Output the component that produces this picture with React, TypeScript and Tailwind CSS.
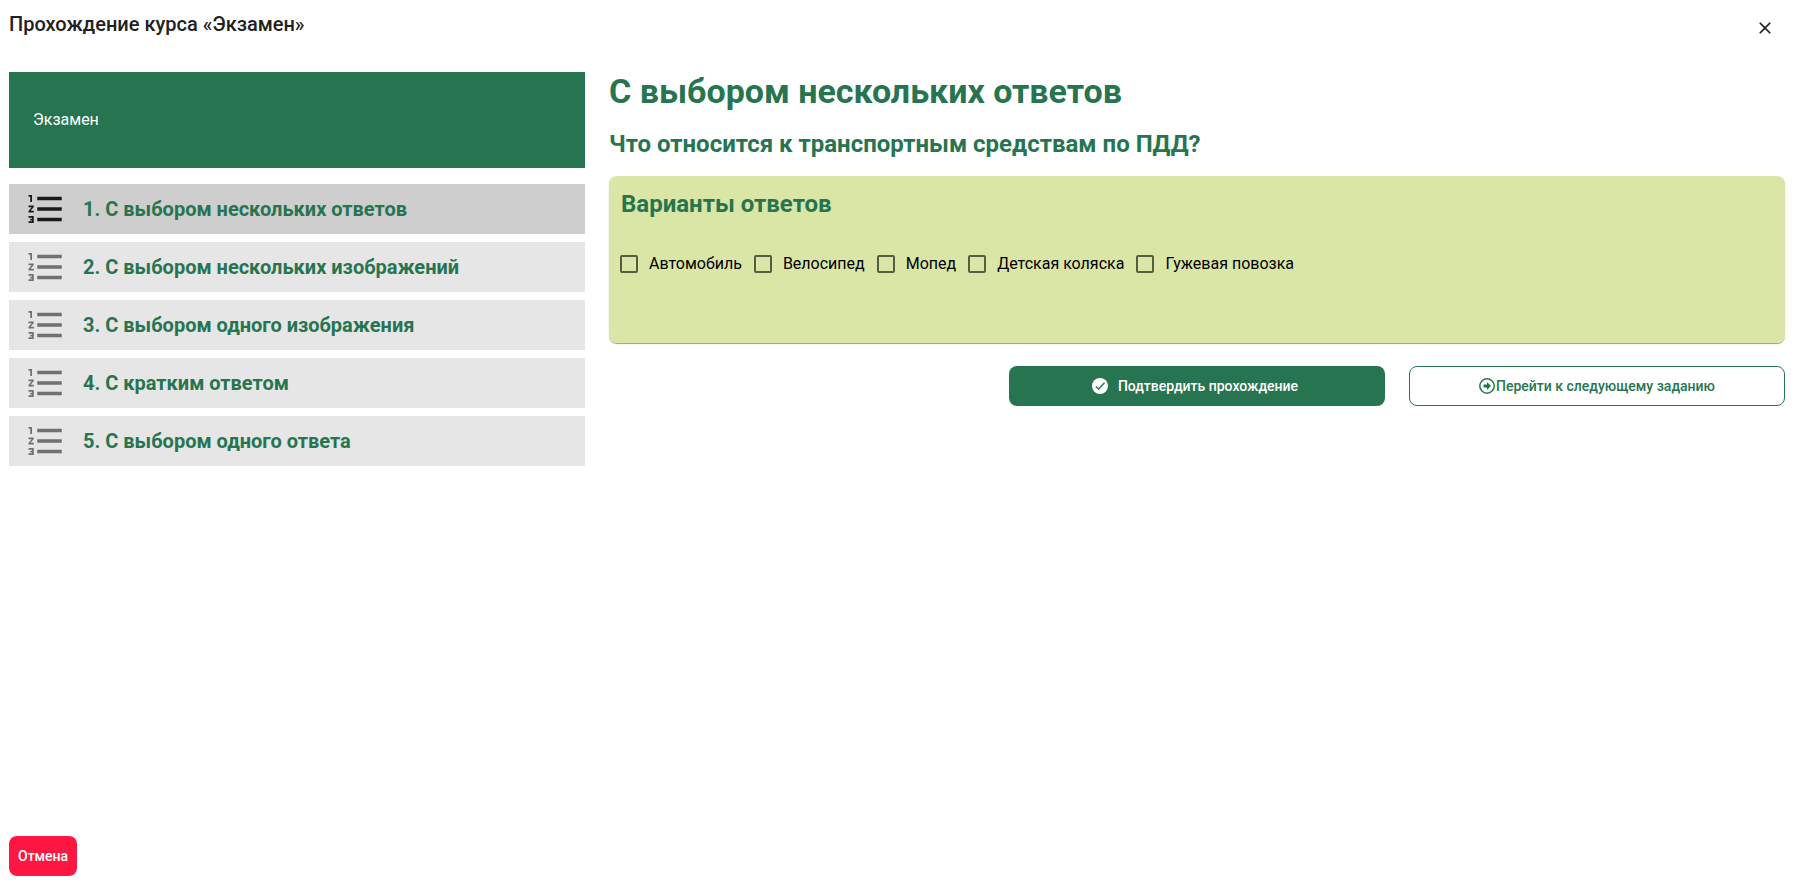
import { useState } from "react";
import { MdClose, MdFormatListNumbered } from "react-icons/md";

const tasks = [
  "С выбором нескольких ответов",
  "С выбором нескольких изображений",
  "С выбором одного изображения",
  "С кратким ответом",
  "С выбором одного ответа",
];

const answers = ["Автомобиль", "Велосипед", "Мопед", "Детская коляска", "Гужевая повозка"];

function CheckIcon() {
  return (
    <svg viewBox="0 0 16 16" className="size-4 shrink-0" fill="none" aria-hidden="true">
      <circle cx="8" cy="8" r="8" fill="#ffffff" />
      <path d="M3.8 8.4 6.6 11.1 12.5 4.8" stroke="#277550" strokeWidth="1.4" />
    </svg>
  );
}

function NextIcon() {
  return (
    <svg viewBox="0 0 16 16" className="size-4 shrink-0" fill="none" aria-hidden="true">
      <circle cx="8" cy="8" r="7.2" stroke="currentColor" strokeWidth="1.5" />
      <path d="M4.5 6.4H8V4L12 8 8 12V9.6H4.5Z" fill="currentColor" />
    </svg>
  );
}

function TaskList({ active, onSelect }: { active: number; onSelect: (index: number) => void }) {
  return (
    <ul className="mt-4 flex flex-col gap-2">
      {tasks.map((task, index) => (
        <li key={task}>
          <button
            type="button"
            onClick={() => onSelect(index)}
            className={`flex h-[50px] w-full items-center gap-4 px-4 text-left ${
              index === active ? "bg-[#cecece] text-[#1a1a1a]" : "bg-[#e6e6e6] text-[#707070]"
            }`}
          >
            <MdFormatListNumbered size={42} className="shrink-0" />
            <span className="text-xl font-bold text-[#277550]">
              {index + 1}. {task}
            </span>
          </button>
        </li>
      ))}
    </ul>
  );
}

function Answers() {
  return (
    <fieldset className="mt-4 h-[167px] rounded-lg bg-[#dae6a6] shadow-[0_1px_1px_rgba(0,0,0,0.4)]">
      <h3 className="px-3 pt-3 text-2xl leading-8 font-bold text-[#277550]">Варианты ответов</h3>
      <div className="mt-6 flex flex-wrap gap-px">
        {answers.map((answer) => (
          <label key={answer} className="flex h-10 items-center text-base text-black">
            <input
              type="checkbox"
              className="m-[11px] size-[18px] appearance-none rounded-xs border-2 border-black/60 checked:bg-[#277550]"
            />
            {answer}
          </label>
        ))}
      </div>
    </fieldset>
  );
}

function App() {
  const [active, setActive] = useState(0);

  return (
    <div className="flex min-h-screen flex-col bg-white pr-[11px] pb-[9px] pl-[9px] font-['Roboto',sans-serif]">
      <header className="flex h-[72px] items-start justify-between pt-2">
        <h6 className="text-xl leading-8 font-medium text-[#212121]">Прохождение курса «Экзамен»</h6>
        <button type="button" aria-label="Закрыть" className="flex size-10 items-center justify-center text-[#212121]">
          <MdClose size={20} />
        </button>
      </header>

      <main className="grid grid-cols-3 items-start gap-6">
        {/* Course tasks */}
        <aside>
          <div className="flex h-24 items-center bg-[#277550] px-6 text-base text-white">Экзамен</div>
          <TaskList active={active} onSelect={setActive} />
        </aside>

        {/* Current task */}
        <section className="col-span-2">
          <h1 className="text-[34px] leading-[38px] font-bold text-[#277550]">С выбором нескольких ответов</h1>
          <h2 className="mt-[18px] text-2xl leading-8 font-bold text-[#277550]">
            Что относится к транспортным средствам по ПДД?
          </h2>
          <Answers />
          <div className="mt-[23px] grid grid-cols-3 gap-6">
            <button
              type="button"
              className="col-start-2 flex h-10 items-center justify-center gap-2.5 rounded-lg bg-[#277550] pr-1 text-sm font-medium text-white"
            >
              <CheckIcon />
              Подтвердить прохождение
            </button>
            <button
              type="button"
              className="flex h-10 items-center justify-center gap-px rounded-lg border border-[#277550] text-sm font-medium text-[#277550]"
            >
              <NextIcon />
              Перейти к следующему заданию
            </button>
          </div>
        </section>
      </main>

      <footer className="mt-auto">
        <button type="button" className="h-10 rounded-lg bg-[#ff1744] px-[9px] text-sm font-medium text-white">
          Отмена
        </button>
      </footer>
    </div>
  );
}

export default App;
